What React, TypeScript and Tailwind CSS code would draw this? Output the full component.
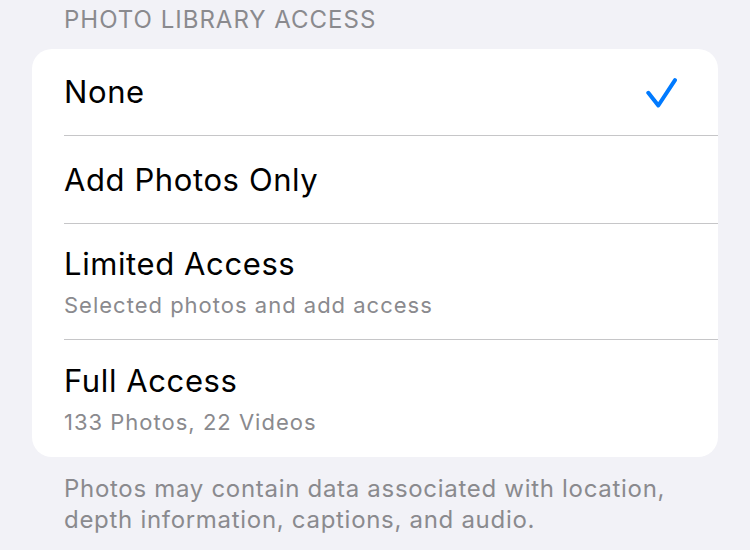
import { ReactNode } from 'react'

const font = { fontFamily: 'Inter, "Noto Sans", sans-serif' }

function Check() {
  return (
    <svg width="34" height="32" viewBox="0 0 34 32" fill="none">
      <polyline
        points="3.3,16.8 13.3,29.5 30,4.2"
        stroke="#007aff"
        strokeWidth="4"
        strokeLinecap="round"
        strokeLinejoin="round"
      />
    </svg>
  )
}

function Row({
  title,
  subtitle,
  trailing,
  last,
  height,
}: {
  title: string
  subtitle?: string
  trailing?: ReactNode
  last?: boolean
  height: string
}) {
  return (
    <div className="pl-8">
      <div
        className={`${height} flex items-center justify-between pr-[39px] ${
          last ? '' : 'border-b border-[#c6c6c8]'
        }`}
      >
        <div className="flex flex-col">
          <span className="text-[31px] leading-[38px] tracking-[0.6px] text-black">{title}</span>
          {subtitle && (
            <span className="mt-[8px] text-[22px] leading-[28px] tracking-[1px] text-[#8a8a8e]">
              {subtitle}
            </span>
          )}
        </div>
        {trailing}
      </div>
    </div>
  )
}

export default function App() {
  return (
    <div className="h-[550px] w-full overflow-hidden bg-[#f2f2f7]" style={font}>
      {/* Section header */}
      <div className="h-[49px] px-16 pt-[4px] text-[24px] leading-[32px] tracking-[1px] text-[#8a8a8e]">
        PHOTO LIBRARY ACCESS
      </div>

      {/* Options card */}
      <div className="mx-8 overflow-hidden rounded-[20px] bg-white">
        <Row title="None" trailing={<Check />} height="h-[87px]" />
        <Row title="Add Photos Only" height="h-[88px]" />
        <Row title="Limited Access" subtitle="Selected photos and add access" height="h-[116px]" />
        <Row title="Full Access" subtitle="133 Photos, 22 Videos" height="h-[117px]" last />
      </div>

      {/* Footer note */}
      <p className="mt-[16px] px-16 text-[24px] leading-[31px] tracking-[0.7px] text-[#8a8a8e]">
        Photos may contain data associated with location,
        <br />
        depth information, captions, and audio.
      </p>
    </div>
  )
}
